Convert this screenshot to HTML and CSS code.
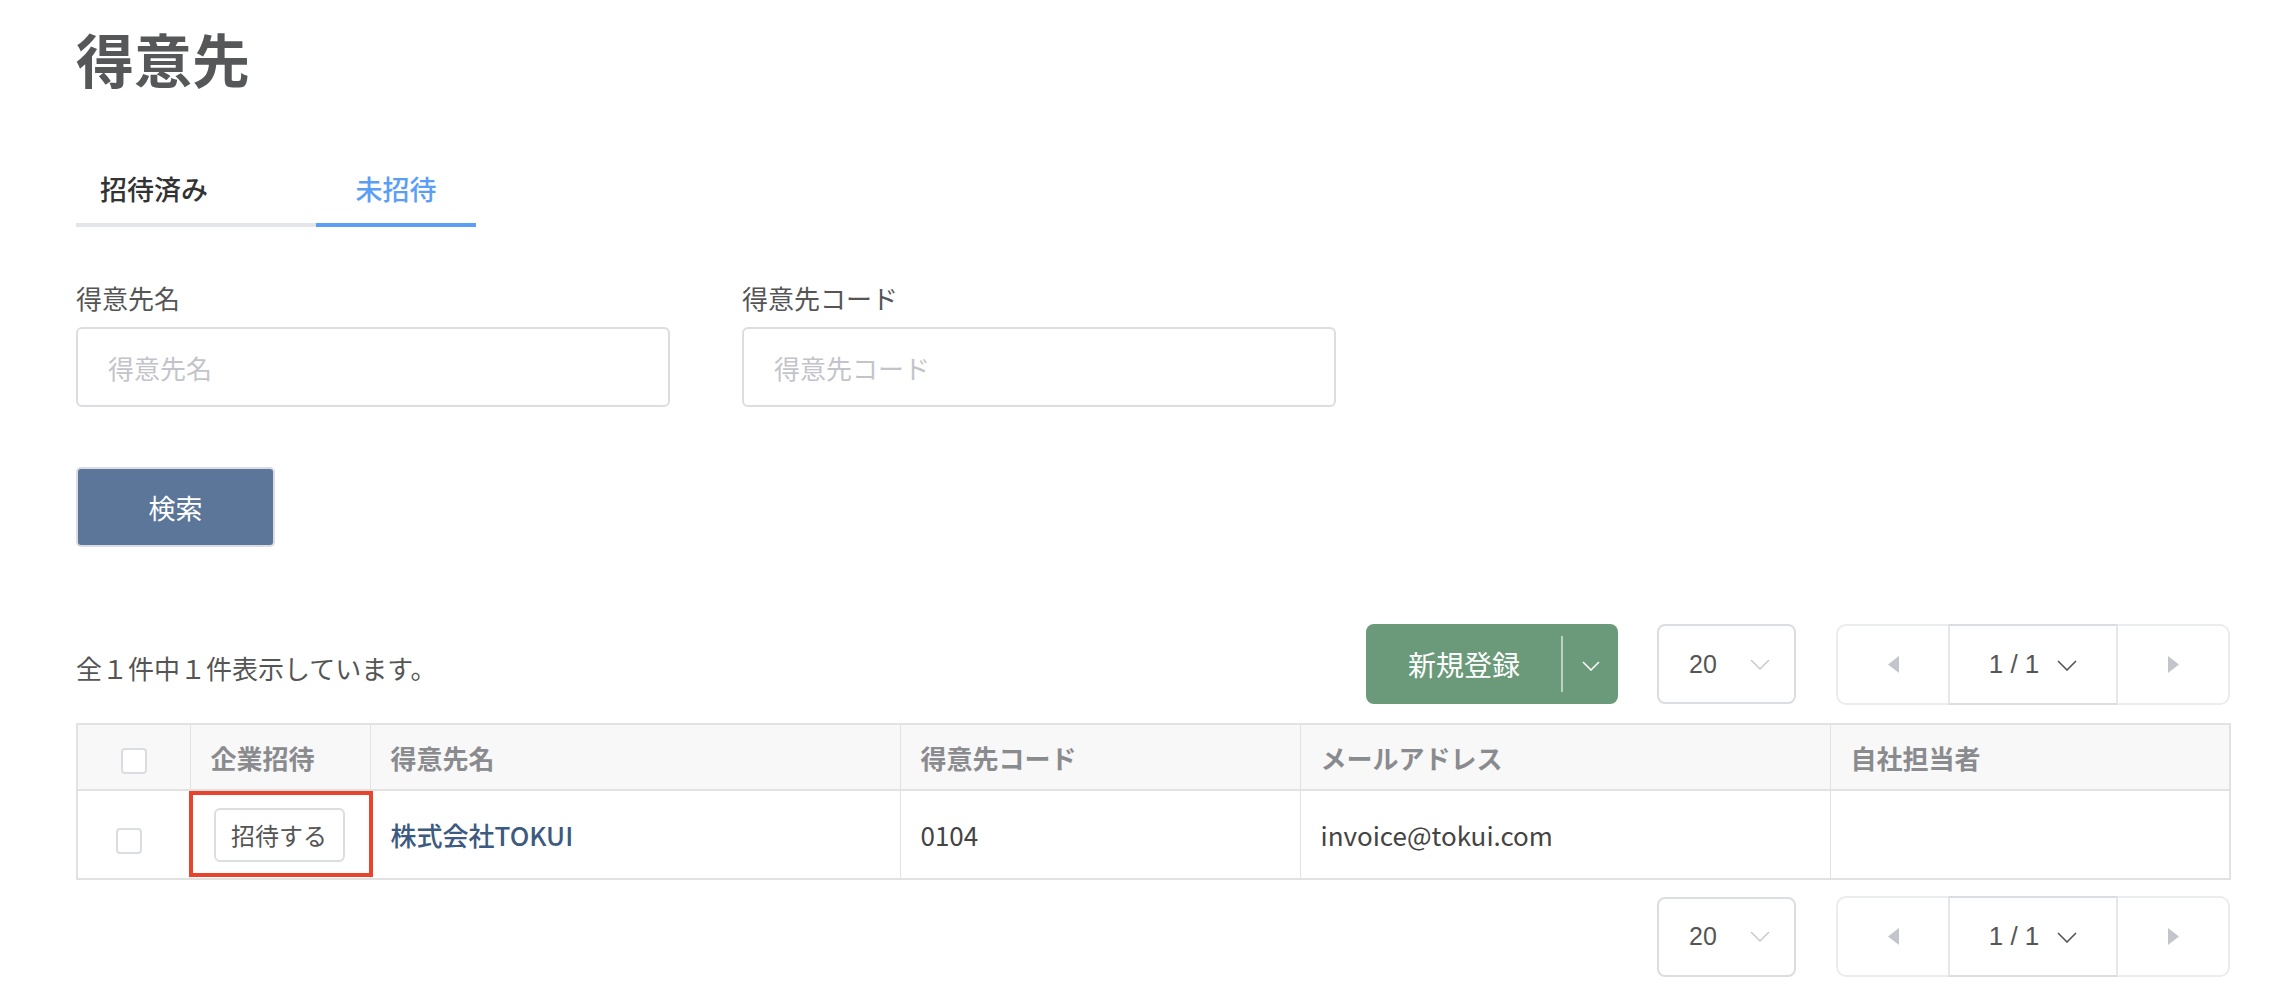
FILE: index.html
```html
<!DOCTYPE html>
<html lang="ja">
<head>
<meta charset="utf-8">
<title>得意先</title>
<link rel="stylesheet" href="styles.css">
</head>
<body>
<div class="page">
  <h1 class="title">得意先</h1>

  <div class="tabs">
    <div class="tab tab-first">招待済み</div>
    <div class="tab tab-active">未招待</div>
  </div>

  <div class="filters">
    <div class="field">
      <label class="label">得意先名</label>
      <input class="input" type="text" placeholder="得意先名">
    </div>
    <div class="field">
      <label class="label">得意先コード</label>
      <input class="input" type="text" placeholder="得意先コード">
    </div>
  </div>

  <button class="search-btn">検索</button>

  <div class="toolbar">
    <div class="count">全１件中１件表示しています。</div>
    <div class="toolbar-right">
      <div class="split-btn">
        <span class="split-main">新規登録</span>
        <span class="split-divider"></span>
        <span class="split-caret"><svg width="18" height="10" viewBox="0 0 18 10"><polyline points="1,1 9,9 17,1" fill="none" stroke="#ffffff" stroke-width="1.5"/></svg></span>
      </div>
      <div class="select">
        <span class="select-value">20</span>
        <svg width="20" height="11" viewBox="0 0 20 11"><polyline points="1,1 10,10 19,1" fill="none" stroke="#c8cad0" stroke-width="1.5"/></svg>
      </div>
      <div class="pager">
        <div class="pager-arrow"><svg width="11" height="17" viewBox="0 0 11 17"><polygon points="11,0 0,8.5 11,17" fill="#c2c5cb"/></svg></div>
        <div class="pager-mid"><span>1 / 1</span><svg width="20" height="11" viewBox="0 0 20 11"><polyline points="1,1 10,10 19,1" fill="none" stroke="#555555" stroke-width="1.6"/></svg></div>
        <div class="pager-arrow"><svg width="11" height="17" viewBox="0 0 11 17"><polygon points="0,0 11,8.5 0,17" fill="#c2c5cb"/></svg></div>
      </div>
    </div>
  </div>

  <table class="table">
    <colgroup>
      <col class="c1"><col class="c2"><col class="c3"><col class="c4"><col class="c5"><col class="c6">
    </colgroup>
    <thead>
      <tr>
        <th class="cb-cell"><span class="checkbox"></span></th>
        <th>企業招待</th>
        <th>得意先名</th>
        <th>得意先コード</th>
        <th>メールアドレス</th>
        <th>自社担当者</th>
      </tr>
    </thead>
    <tbody>
      <tr>
        <td class="cb-cell cb-row"><span class="checkbox"></span></td>
        <td class="invite-cell"><button class="invite-btn">招待する</button><span class="highlight"></span></td>
        <td class="company">株式会社TOKUI</td>
        <td>0104</td>
        <td>invoice@tokui.com</td>
        <td></td>
      </tr>
    </tbody>
  </table>

  <div class="bottom-bar">
    <div class="select">
      <span class="select-value">20</span>
      <svg width="20" height="11" viewBox="0 0 20 11"><polyline points="1,1 10,10 19,1" fill="none" stroke="#c8cad0" stroke-width="1.5"/></svg>
    </div>
    <div class="pager">
      <div class="pager-arrow"><svg width="11" height="17" viewBox="0 0 11 17"><polygon points="11,0 0,8.5 11,17" fill="#c2c5cb"/></svg></div>
      <div class="pager-mid"><span>1 / 1</span><svg width="20" height="11" viewBox="0 0 20 11"><polyline points="1,1 10,10 19,1" fill="none" stroke="#555555" stroke-width="1.6"/></svg></div>
      <div class="pager-arrow"><svg width="11" height="17" viewBox="0 0 11 17"><polygon points="0,0 11,8.5 0,17" fill="#c2c5cb"/></svg></div>
    </div>
  </div>
</div>
</body>
</html>
```

FILE: styles.css
```css
* { box-sizing: border-box; }

html, body {
  margin: 0;
  padding: 0;
  background: #ffffff;
}

body {
  font-family: "Noto Sans CJK JP", "Noto Sans", sans-serif;
  color: #555555;
}

.page {
  padding: 29px 48px 0 76px;
}

.title {
  margin: 0;
  font-size: 58px;
  line-height: 58px;
  font-weight: 700;
  color: #555759;
}

.tabs {
  display: flex;
  margin-top: 88px;
}

.tab {
  font-size: 27px;
  line-height: 27px;
  padding-bottom: 21px;
  border-bottom: 4px solid #e4e5ea;
}

.tab-first {
  width: 240px;
  padding-left: 24px;
  color: #333333;
  font-weight: 500;
}

.tab-active {
  width: 160px;
  text-align: center;
  color: #5b9ef5;
  border-bottom-color: #5b9ef5;
  font-weight: 500;
}

.filters {
  display: flex;
  gap: 72px;
  margin-top: 57px;
}

.field {
  display: flex;
  flex-direction: column;
  gap: 16px;
  width: 594px;
}

.label {
  font-size: 26px;
  line-height: 27px;
  color: #555555;
}

.input {
  height: 80px;
  width: 100%;
  border: 2px solid #dcdde3;
  border-radius: 6px;
  padding: 0 30px;
  font-family: "Noto Sans CJK JP", "Noto Sans", sans-serif;
  font-size: 26px;
  color: #555555;
  outline: none;
}

.input::placeholder {
  color: #c3c4c9;
}

.search-btn {
  display: block;
  margin-top: 60px;
  width: 199px;
  height: 80px;
  background: #5b7699;
  border: 2px solid #d9dde3;
  border-radius: 5px;
  color: #ffffff;
  font-family: "Noto Sans CJK JP", "Noto Sans", sans-serif;
  font-size: 27px;
}

.toolbar {
  display: flex;
  align-items: center;
  justify-content: space-between;
  margin-top: 77px;
  height: 80px;
}

.count {
  font-size: 26px;
  color: #555555;
  padding-top: 6px;
}

.toolbar-right {
  display: flex;
  align-items: center;
}

.split-btn {
  display: flex;
  align-items: center;
  width: 252px;
  height: 80px;
  background: #6a9a79;
  border-radius: 8px;
  color: #ffffff;
  margin-right: 39px;
}

.split-main {
  width: 195px;
  padding-left: 42px;
  font-size: 28px;
}

.split-divider {
  width: 2px;
  height: 56px;
  background: rgba(255, 255, 255, 0.55);
}

.split-caret {
  flex: 1;
  display: flex;
  justify-content: center;
  align-items: center;
  padding-top: 4px;
}

.select {
  display: flex;
  align-items: center;
  justify-content: space-between;
  width: 139px;
  height: 80px;
  border: 2px solid #dcdde3;
  border-radius: 8px;
  padding: 0 24px 0 30px;
  margin-right: 40px;
}

.select-value {
  font-family: "Liberation Sans", Arial, sans-serif;
  font-size: 25px;
  color: #555555;
}

.pager {
  display: flex;
  width: 394px;
  height: 81px;
  border: 2px solid #ebecf0;
  border-radius: 10px;
}

.pager-arrow {
  width: 110px;
  display: flex;
  align-items: center;
  justify-content: center;
}

.pager-mid {
  flex: 1;
  display: flex;
  align-items: center;
  justify-content: center;
  gap: 18px;
  margin: -2px 0;
  border: 2px solid #dcdde2;
  border-left-color: #e6e7eb;
  border-right-color: #e6e7eb;
  font-family: "Liberation Sans", Arial, sans-serif;
  font-size: 26px;
  color: #555555;
}

.pager-mid svg {
  margin-top: 2px;
}

.table {
  margin-top: 19px;
  width: 2154px;
  border-collapse: collapse;
  table-layout: fixed;
  border: 2px solid #e2e2e2;
}

.c1 { width: 113px; }
.c2 { width: 180px; }
.c3 { width: 530px; }
.c4 { width: 400px; }
.c5 { width: 530px; }
.c6 { width: 400px; }

.table th,
.table td {
  border-left: 1px solid #e2e2e2;
  border-right: 1px solid #e2e2e2;
  text-align: left;
  padding: 0 0 0 20px;
  font-size: 26px;
}

.table thead tr {
  height: 66px;
  background: #f8f8f8;
  border-bottom: 2px solid #e2e2e2;
}

.table th {
  color: #8a8b8e;
  font-weight: 700;
}

.table tbody tr {
  height: 89px;
}

.table td {
  color: #444444;
}

.table .cb-cell {
  padding: 0;
  text-align: center;
}

.table .cb-row {
  padding-right: 9px;
  padding-top: 4px;
}

.checkbox {
  display: inline-block;
  width: 26px;
  height: 26px;
  border: 2px solid #dcdde2;
  border-radius: 4px;
  background: #ffffff;
  vertical-align: middle;
}

.table .invite-cell {
  position: relative;
  padding-left: 23px;
}

.invite-btn {
  display: block;
  width: 131px;
  height: 54px;
  border: 2px solid #dcdde3;
  border-radius: 6px;
  background: #ffffff;
  color: #555555;
  font-family: "Noto Sans CJK JP", "Noto Sans", sans-serif;
  font-size: 24px;
  padding: 0;
}

.highlight {
  position: absolute;
  top: 0;
  left: -2px;
  right: -3px;
  bottom: 1px;
  border: 4px solid #e8432d;
  pointer-events: none;
}

.table .company {
  color: #3d5a80;
  font-weight: 500;
}

.bottom-bar {
  display: flex;
  justify-content: flex-end;
  align-items: center;
  margin-top: 16px;
  width: 2154px;
}
```
